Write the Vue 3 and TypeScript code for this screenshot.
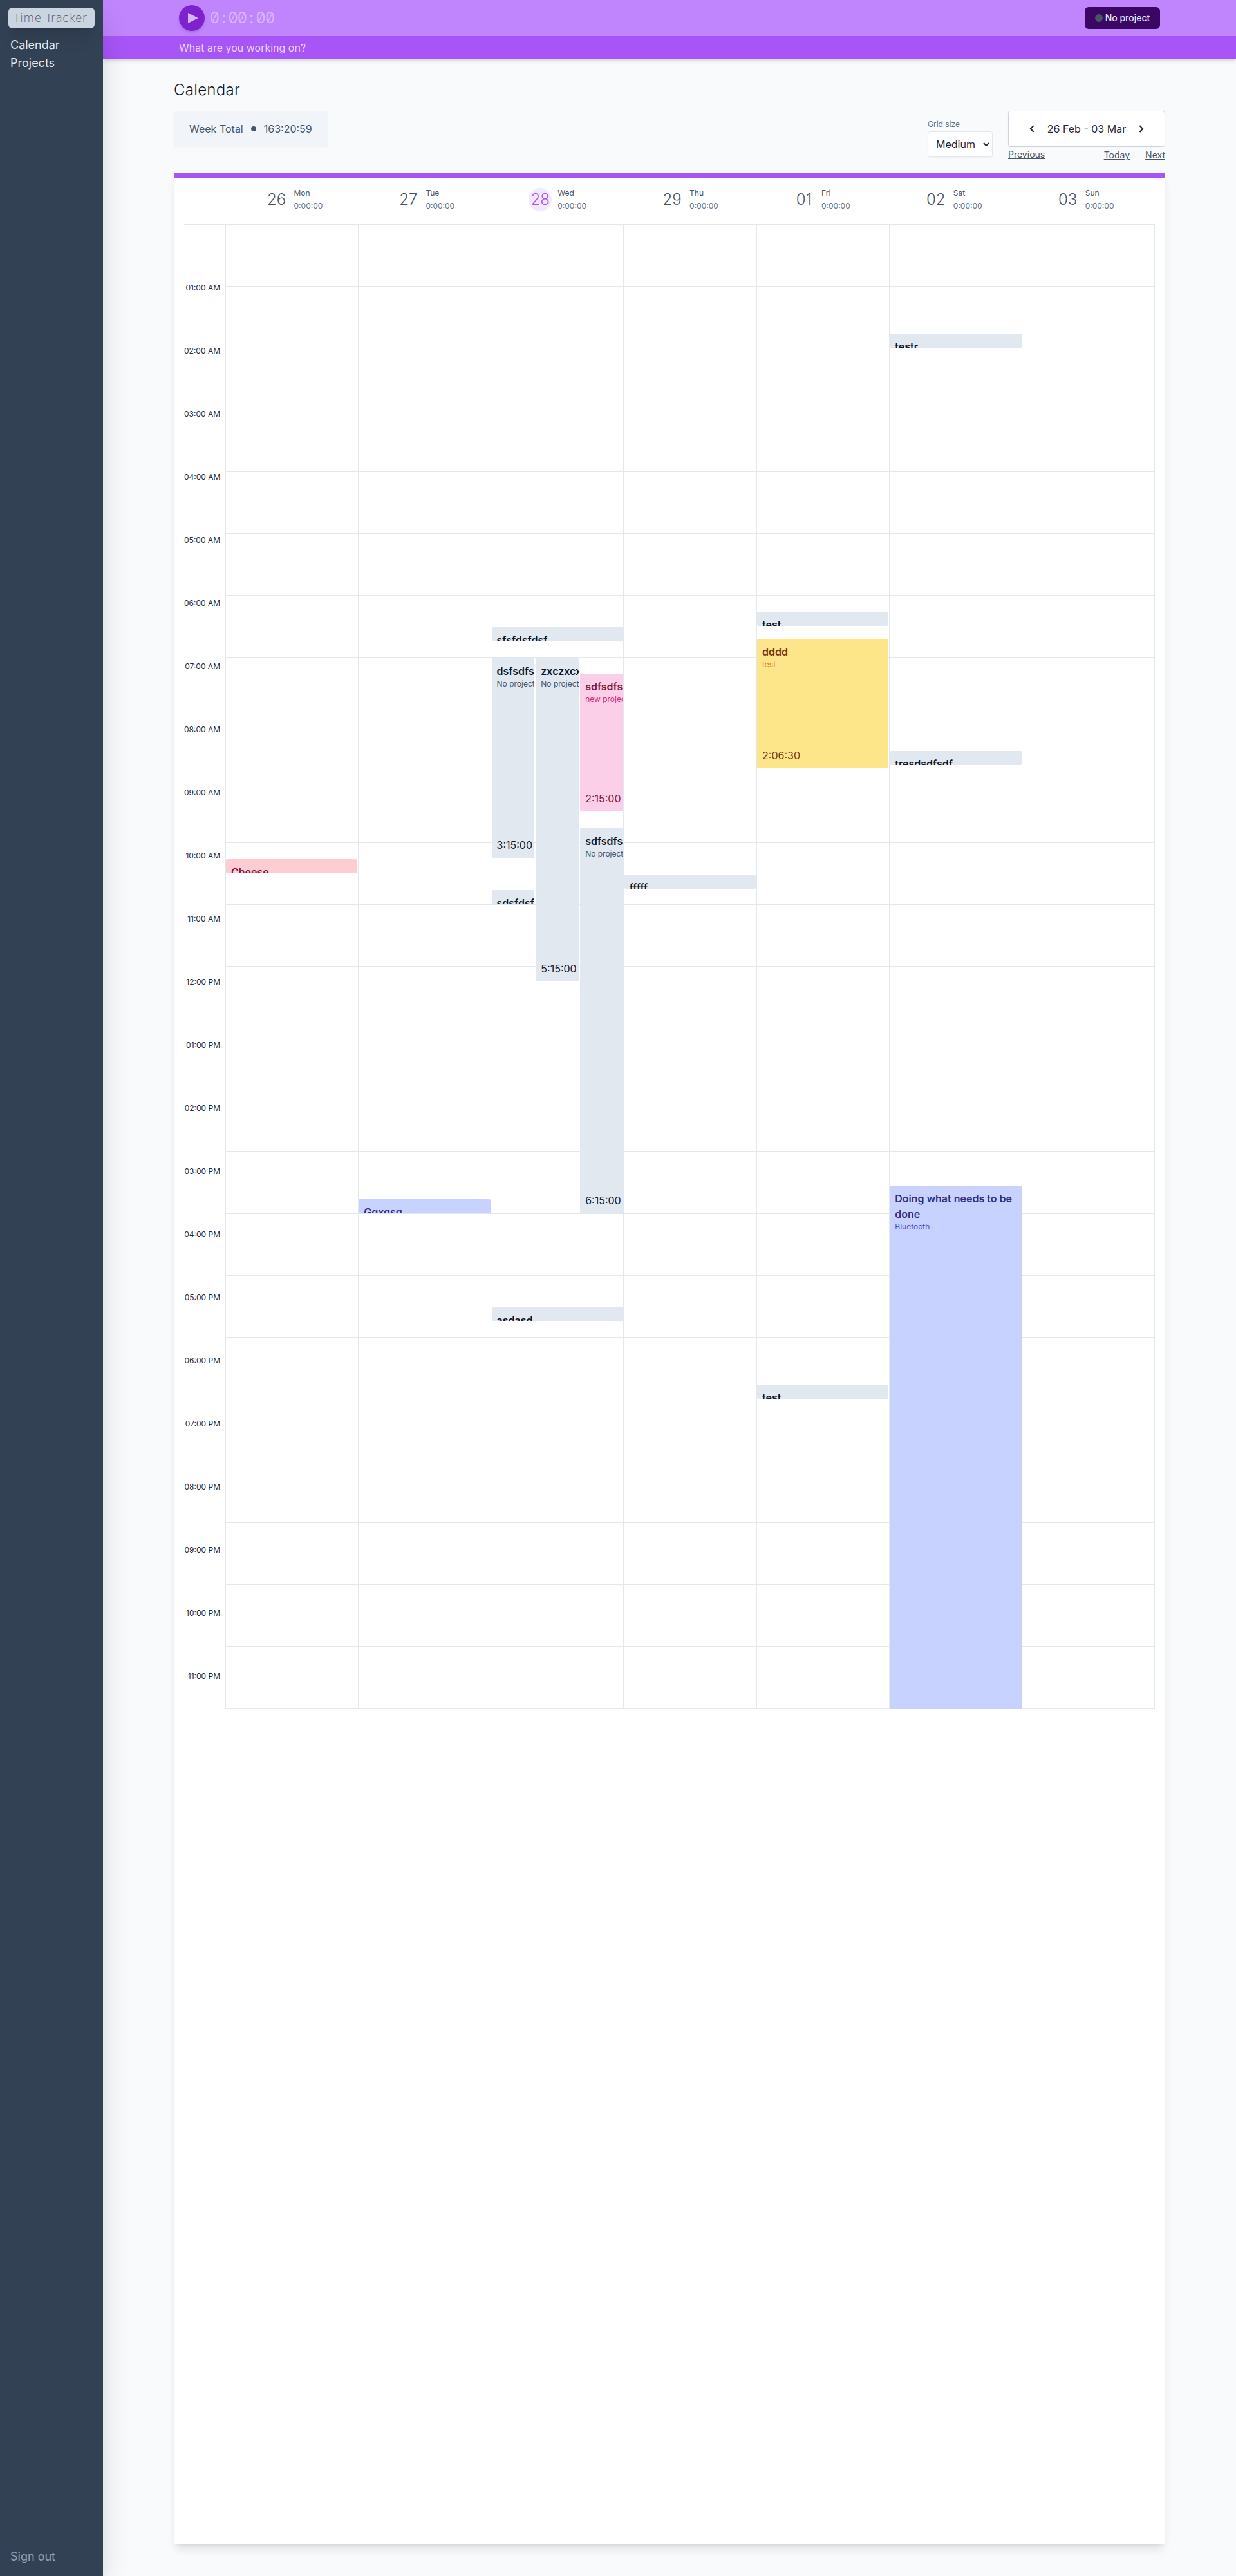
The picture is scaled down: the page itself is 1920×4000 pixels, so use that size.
<script setup lang="ts">
interface Day {
  num: string
  name: string
  total: string
  today?: boolean
}

interface Entry {
  day: number
  start: number // minutes from midnight
  length: number // minutes
  title: string
  project?: string
  time?: string
  color: 'slate' | 'rose' | 'indigo' | 'pink' | 'amber'
  lane?: number
  lanes?: number
}

const PX_PER_MINUTE = 1.6
const GAP = 2

const clock = '0:00:00'

const days: Day[] = [
  { num: '26', name: 'Mon', total: '0:00:00' },
  { num: '27', name: 'Tue', total: '0:00:00' },
  { num: '28', name: 'Wed', total: '0:00:00', today: true },
  { num: '29', name: 'Thu', total: '0:00:00' },
  { num: '01', name: 'Fri', total: '0:00:00' },
  { num: '02', name: 'Sat', total: '0:00:00' },
  { num: '03', name: 'Sun', total: '0:00:00' },
]

const hours: string[] = Array.from({ length: 23 }, (_, i) => {
  const h = i + 1
  const twelve = h > 12 ? h - 12 : h
  return `${String(twelve).padStart(2, '0')}:00 ${h < 12 ? 'AM' : 'PM'}`
})

const entries: Entry[] = [
  { day: 0, start: 615, length: 15, title: 'Cheese', color: 'rose' },
  { day: 1, start: 945, length: 15, title: 'Gqxqsq', color: 'indigo' },
  { day: 2, start: 390, length: 15, title: 'sfsfdsfdsf', color: 'slate' },
  { day: 2, start: 420, length: 195, title: 'dsfsdfsdf', project: 'No project', time: '3:15:00', color: 'slate', lane: 0, lanes: 3 },
  { day: 2, start: 420, length: 315, title: 'zxczxcxzc', project: 'No project', time: '5:15:00', color: 'slate', lane: 1, lanes: 3 },
  { day: 2, start: 435, length: 135, title: 'sdfsdfsdf', project: 'new project', time: '2:15:00', color: 'pink', lane: 2, lanes: 3 },
  { day: 2, start: 585, length: 375, title: 'sdfsdfsdf', project: 'No project', time: '6:15:00', color: 'slate', lane: 2, lanes: 3 },
  { day: 2, start: 645, length: 15, title: 'sdsfdsf', color: 'slate', lane: 0, lanes: 3 },
  { day: 2, start: 1050, length: 15, title: 'asdasd', color: 'slate' },
  { day: 3, start: 630, length: 15, title: 'fffff', color: 'slate' },
  { day: 4, start: 375, length: 15, title: 'test', color: 'slate' },
  { day: 4, start: 401.5, length: 126.5, title: 'dddd', project: 'test', time: '2:06:30', color: 'amber' },
  { day: 4, start: 1125, length: 15, title: 'test', color: 'slate' },
  { day: 5, start: 105, length: 15, title: 'testr', color: 'slate' },
  { day: 5, start: 510, length: 15, title: 'tresdsdfsdf', color: 'slate' },
  { day: 5, start: 932, length: 600, title: 'Doing what needs to be done', project: 'Bluetooth', color: 'indigo' },
]

const entriesOf = (day: number): Entry[] => entries.filter((e) => e.day === day)

function place(e: Entry): Record<string, string> {
  const lanes = e.lanes ?? 1
  const lane = e.lane ?? 0
  const laneWidth = `(100% - ${(lanes - 1) * GAP}px) / ${lanes}`
  return {
    top: `${e.start * PX_PER_MINUTE + GAP}px`,
    height: `${e.length * PX_PER_MINUTE - GAP}px`,
    left: `calc((${laneWidth} + ${GAP}px) * ${lane})`,
    width: `calc(${laneWidth})`,
  }
}
</script>

<template>
  <div class="app">
    <aside class="sidebar">
      <div class="logo">Time Tracker</div>
      <nav class="nav">
        <a>Calendar</a>
        <a>Projects</a>
      </nav>
      <a class="signout">Sign out</a>
    </aside>

    <div class="main">
      <header class="topbar">
        <div class="timer-row">
          <button class="play" aria-label="Start">
            <svg width="16" height="16" viewBox="0 0 16 16"><path d="M0 0 L16 8 L0 16 Z" fill="#d8b4fe" /></svg>
          </button>
          <span class="clock"><span v-for="(c, i) in clock" :key="i">{{ c }}</span></span>
          <button class="project"><i class="project-dot"></i>No project</button>
        </div>
        <div class="task-row">What are you working on?</div>
      </header>

      <main class="content">
        <h1>Calendar</h1>
        <div class="tools">
          <div class="total">
            <span>Week Total</span><i class="total-dot"></i><span>163:20:59</span>
          </div>
          <div class="controls">
            <div class="grid-size">
              <span class="label">Grid size</span>
              <div class="select">
                Medium
                <svg width="10" height="6" viewBox="0 0 10 6"><path d="M1 1 L5 5 L9 1" fill="none" stroke="#1e293b" stroke-width="2" /></svg>
              </div>
            </div>
            <div class="range">
              <div class="range-box">
                <svg width="8" height="12" viewBox="0 0 8 12"><path d="M6.6 1 L1.8 6 L6.6 11" fill="none" stroke="#1e293b" stroke-width="2" /></svg>
                <span>26 Feb - 03 Mar</span>
                <svg width="8" height="12" viewBox="0 0 8 12"><path d="M1.4 1 L6.2 6 L1.4 11" fill="none" stroke="#1e293b" stroke-width="2" /></svg>
              </div>
              <div class="links">
                <a>Previous</a>
                <span class="links-right"><a>Today</a><a>Next</a></span>
              </div>
            </div>
          </div>
        </div>

        <section class="card">
          <div class="days">
            <div v-for="d in days" :key="d.num" class="day">
              <span class="day-num" :class="{ today: d.today }">{{ d.num }}</span>
              <span class="day-info">
                <span class="day-name">{{ d.name }}</span>
                <span class="day-total">{{ d.total }}</span>
              </span>
            </div>
          </div>

          <div class="board">
            <div class="hours">
              <span v-for="h in hours" :key="h" class="hour">{{ h }}</span>
            </div>
            <div class="week">
              <div class="cells">
                <div v-for="n in 168" :key="n" class="cell"></div>
              </div>
              <div class="layer">
                <div v-for="(d, i) in days" :key="d.num" class="lane">
                  <article
                    v-for="(e, j) in entriesOf(i)"
                    :key="j"
                    class="entry"
                    :class="e.color"
                    :style="place(e)"
                  >
                    <div>
                      <div class="entry-title">{{ e.title }}</div>
                      <div v-if="e.project" class="entry-project">{{ e.project }}</div>
                    </div>
                    <div v-if="e.time" class="entry-time">{{ e.time }}</div>
                  </article>
                </div>
              </div>
            </div>
          </div>
        </section>
      </main>
    </div>
  </div>
</template>

<style>
body {
  background: #f8fafc;
}
</style>

<style scoped>
.app,
.app * {
  box-sizing: border-box;
}
.app {
  display: flex;
  height: 4000px;
  overflow: hidden;
  background: #f8fafc;
  color: #0f172a;
  font-family: Inter, 'Liberation Sans', sans-serif;
  font-size: 16px;
  line-height: 24px;
}
button {
  border: 0;
  padding: 0;
  font: inherit;
}
svg {
  display: block;
}

/* Sidebar */
.sidebar {
  position: relative;
  z-index: 2;
  display: flex;
  flex-direction: column;
  width: 160px;
  padding: 12px 13px 16px;
  background: #334155;
  color: #e2e8f0;
  box-shadow: 0 25px 50px -12px rgba(0, 0, 0, 0.25);
  font-size: 18px;
  line-height: 28px;
}
.logo {
  height: 32px;
  padding-left: 8px;
  border-radius: 6px;
  background: #cbd5e1;
  color: #475569;
  box-shadow: 0 20px 25px -5px rgba(0, 0, 0, 0.1), 0 8px 10px -6px rgba(0, 0, 0, 0.1);
  font-family: 'DejaVu Sans', sans-serif;
  font-weight: 200;
  font-size: 17px;
  letter-spacing: 0.5px;
  line-height: 32px;
  white-space: nowrap;
}
.nav {
  display: flex;
  flex-direction: column;
  padding: 12px 3px 0;
}
.signout {
  margin-top: auto;
  padding-left: 3px;
  color: #94a3b8;
}

/* Top bar */
.main {
  flex: 1;
  display: flex;
  flex-direction: column;
  min-width: 0;
}
.topbar {
  color: #e9d5ff;
  box-shadow: 0 4px 6px -1px rgba(0, 0, 0, 0.1), 0 2px 4px -2px rgba(0, 0, 0, 0.1);
}
.timer-row {
  display: flex;
  align-items: center;
  height: 56px;
  padding: 0 118px;
  background: #c084fc;
}
.play {
  display: flex;
  align-items: center;
  justify-content: center;
  width: 40px;
  height: 40px;
  padding-left: 3px;
  border-radius: 50%;
  background: #7e22ce;
  box-shadow: 0 4px 6px -1px rgba(0, 0, 0, 0.1), 0 2px 4px -2px rgba(0, 0, 0, 0.1);
}
.clock {
  display: flex;
  margin-left: 8px;
  color: #d8b4fe;
  font-size: 24px;
  font-variant-numeric: slashed-zero;
  line-height: 32px;
}
.clock span {
  display: flex;
  justify-content: center;
  width: 14.4px;
}
.project {
  display: flex;
  align-items: center;
  justify-content: center;
  gap: 4px;
  width: 117px;
  height: 34px;
  margin-left: auto;
  border-radius: 6px;
  background: #3b0764;
  color: #e2e8f0;
  font-size: 14px;
  font-weight: 500;
}
.project-dot {
  width: 12px;
  height: 12px;
  border-radius: 50%;
  background: #475569;
}
.task-row {
  height: 36px;
  padding: 0 118px;
  background: #a855f7;
  line-height: 36px;
}

/* Page heading */
.content {
  display: flex;
  flex-direction: column;
  flex: 1;
  padding: 32px 110px 49px;
}
h1 {
  margin: 0;
  font-size: 24px;
  font-weight: 300;
  letter-spacing: 0.3px;
  line-height: 32px;
}
.tools {
  display: flex;
  justify-content: space-between;
  height: 96px;
  margin-top: 16px;
}
.total {
  display: flex;
  align-items: center;
  gap: 12px;
  height: 56px;
  padding: 0 24px;
  border-radius: 4px;
  background: #f1f5f9;
  color: #475569;
  box-shadow: 0 1px 2px rgba(0, 0, 0, 0.05);
}
.total-dot {
  width: 8px;
  height: 8px;
  border-radius: 50%;
  background: #475569;
}
.controls {
  display: flex;
  gap: 24px;
}
.grid-size {
  display: flex;
  flex-direction: column;
  width: 101px;
  padding-top: 13px;
}
.label {
  color: #64748b;
  font-size: 12px;
  line-height: 16px;
}
.select {
  display: flex;
  align-items: center;
  justify-content: space-between;
  height: 40px;
  margin-top: 3px;
  padding: 0 4px 0 12px;
  border: 1px solid #e2e8f0;
  border-radius: 4px;
  background: #fff;
  color: #1e293b;
  box-shadow: 0 1px 2px rgba(0, 0, 0, 0.05);
}
.range {
  width: 244px;
}
.range-box {
  display: flex;
  align-items: center;
  justify-content: space-between;
  height: 56px;
  padding: 0 32px;
  border: 1px solid #cbd5e1;
  border-radius: 4px;
  background: #fff;
  color: #1e293b;
  box-shadow: 0 1px 2px rgba(0, 0, 0, 0.05);
}
.links {
  display: flex;
  justify-content: space-between;
  color: #475569;
  font-size: 14px;
  line-height: 24px;
}
.links a {
  text-decoration: underline;
}
.links-right {
  display: flex;
  gap: 24px;
  padding-top: 1px;
}

/* Calendar card */
.card {
  flex: 1;
  border-top: 8px solid #a855f7;
  border-radius: 4px;
  background: #fff;
  box-shadow: 0 10px 15px -3px rgba(0, 0, 0, 0.1), 0 4px 6px -4px rgba(0, 0, 0, 0.1);
}
.days {
  display: grid;
  grid-template-columns: repeat(7, 1fr);
  height: 72px;
  padding: 16px 22px 0 84px;
}
.day {
  display: flex;
  justify-content: center;
  gap: 9px;
  height: 36px;
}
.day-num {
  width: 36px;
  height: 36px;
  border-radius: 50%;
  color: #475569;
  font-size: 24px;
  font-weight: 300;
  line-height: 36px;
  text-align: center;
}
.day-num.today {
  background: #f3e8ff;
  color: #a855f7;
}
.day-info {
  display: flex;
  flex-direction: column;
  margin-top: -2px;
  color: #475569;
  font-size: 12px;
  line-height: 20px;
}
.day-total {
  color: #64748b;
}
.board {
  display: flex;
  margin: 0 16px;
}
.hours {
  display: flex;
  flex-direction: column;
  width: 64px;
  padding: 49px 8px 0 0;
  border-top: 1px solid #e2e8f0;
  color: #1e293b;
  font-size: 12px;
  text-align: right;
}
.hour {
  height: 98px;
  line-height: 97px;
  white-space: nowrap;
}
.week {
  position: relative;
  flex: 1;
  height: 2305px;
  border-top: 1px solid #e2e8f0;
  border-left: 1px solid #e2e8f0;
}
.cells {
  display: grid;
  grid-template-columns: repeat(7, 1fr);
  grid-auto-rows: 96px;
}
.cell {
  border-right: 1px solid #e2e8f0;
  border-bottom: 1px solid #e2e8f0;
}

/* Entries lie over the hour grid */
.layer {
  position: absolute;
  inset: -1px 1px 0 0;
  display: grid;
  grid-template-columns: repeat(7, 1fr);
  column-gap: 1.85px;
  overflow: hidden;
}
.lane {
  position: relative;
}
.entry {
  position: absolute;
  display: flex;
  flex-direction: column;
  justify-content: space-between;
  overflow: hidden;
  padding: 8px;
  border-radius: 2px;
}
.entry-title {
  font-weight: 600;
}
.entry-project {
  font-size: 12px;
  line-height: 16px;
  white-space: nowrap;
}
.slate {
  background: #e2e8f0;
  color: #0f172a;
}
.slate .entry-project {
  color: #475569;
}
.rose {
  background: #fecdd3;
  color: #881337;
}
.indigo {
  background: #c7d2fe;
  color: #312e81;
}
.indigo .entry-project {
  color: #4f46e5;
}
.pink {
  background: #fbcfe8;
  color: #831843;
}
.pink .entry-project {
  color: #db2777;
}
.amber {
  background: #fde68a;
  color: #78350f;
}
.amber .entry-project {
  color: #d97706;
}
</style>
